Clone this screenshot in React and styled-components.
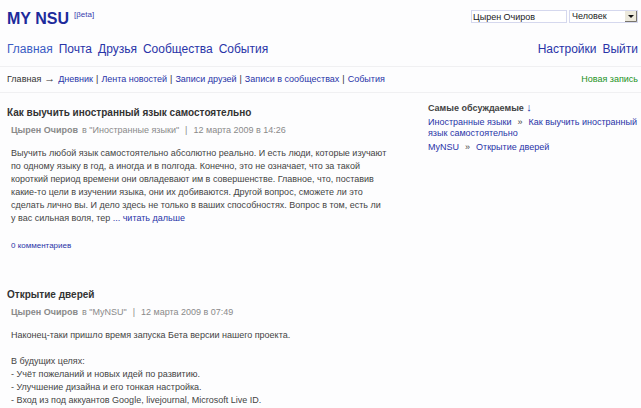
import React from "react";
import styled, { createGlobalStyle } from "styled-components";

const GlobalStyle = createGlobalStyle`
  * { box-sizing: border-box; }
  body {
    margin: 0;
    background: #fdfdfe;
    color: #444;
    font: 9px/13px "Liberation Sans", Arial, sans-serif;
  }
  h1, h2, h3, p, ul { margin: 0; padding: 0; }
`;

const Link = styled.a`
  color: ${(p) => p.$color || "#2934a8"};
  text-decoration: none;
  &:hover { text-decoration: underline; }
`;

const TopBar = styled.header`
  display: flex;
  justify-content: space-between;
  align-items: flex-start;
  height: 40px;
  padding: 9px 3px 0 7px;
`;

const Logo = styled.h1`
  display: flex;
  align-items: flex-start;
  gap: 5px;
  color: #1d2b9b;
  font: bold 16px/20px "Liberation Sans", Arial, sans-serif;
`;

const Beta = styled.sup`
  color: #3942ae;
  font: 8px/12px "Liberation Sans", Arial, sans-serif;
`;

const Search = styled.form`
  display: flex;
  gap: 2px;
  padding-top: 1px;
`;

const SearchInput = styled.input`
  width: 96px;
  height: 13px;
  padding: 0 1px;
  border: 1px solid #d5d8ee;
  background: #fff;
  color: #222;
  font: 9px/11px "Liberation Sans", Arial, sans-serif;
`;

const SelectBox = styled.div`
  display: grid;
  width: 69px;
  height: 13px;
  border: 1px solid #d5d8ee;
  background: #fff;
  > * { grid-area: 1 / 1; }
`;

const Select = styled.select`
  appearance: none;
  min-width: 0;
  height: 11px;
  padding: 0 14px 0 2px;
  border: 0;
  background: transparent;
  color: #222;
  font: 9px/11px "Liberation Sans", Arial, sans-serif;
`;

const Arrow = styled.svg`
  justify-self: end;
  width: 12px;
  height: 11px;
  pointer-events: none;
`;

const MainNav = styled.nav`
  display: flex;
  justify-content: space-between;
  height: 26px;
  padding: 0 3px 0 7px;
  font-size: 12px;
  line-height: 18px;
`;

const NavGroup = styled.div`
  display: flex;
  gap: 6px;
`;

const SubNav = styled.nav`
  display: flex;
  justify-content: space-between;
  padding: 6px 3px 6px 7px;
  border-top: 1px solid #f0f0f2;
  border-bottom: 1px solid #f0f0f2;
  color: #333;
`;

const Trail = styled.div`
  display: flex;
  gap: 3px;
`;

const TrailArrow = styled.span`
  font-size: 11px;
  line-height: 11px;
`;

const Columns = styled.main`
  display: grid;
  grid-template-columns: minmax(0, 393fr) minmax(0, 210fr);
  column-gap: 28px;
  padding: 10px 3px 0 7px;
`;

const Feed = styled.div`
  display: grid;
  align-content: start;
  gap: 36px;
  padding-top: 3px;
`;

const Title = styled.h2`
  color: #333;
  font-size: 10px;
  line-height: 13px;
`;

const Meta = styled.p`
  display: flex;
  gap: 4px;
  padding: 5px 4px 10px;
  color: #8a8a8a;
`;

const Divider = styled.span`
  margin: 0 2px;
`;

const Body = styled.p`
  padding: 0 4px;
  white-space: pre-line;
`;

const Comments = styled.p`
  padding: 14px 4px 0;
  font-size: 8px;
`;

const Sidebar = styled.aside`
  line-height: 11px;
`;

const SideTitle = styled.h3`
  margin-bottom: 3px;
  font-size: 9px;
  line-height: 11px;
`;

const Topics = styled.ul`
  display: grid;
  gap: 3px;
  list-style: none;
`;

const Chevron = styled.span`
  margin: 0 6px;
`;

const DownArrow = styled(Link)`
  font-size: 11px;
  font-weight: normal;
  line-height: 9px;
`;

const sections = ["Дневник", "Лента новостей", "Записи друзей", "Записи в сообществах", "События"];

export default function App() {
  return (
    <>
      <GlobalStyle />
      <TopBar>
        <Logo>MY NSU<Beta>[βeta]</Beta></Logo>
        <Search>
          <SearchInput aria-label="Поиск" defaultValue="Цырен Очиров" />
          <SelectBox>
            <Select aria-label="Тип" defaultValue="Человек">
              <option>Человек</option>
              <option>Сообщество</option>
            </Select>
            <Arrow viewBox="0 0 12 11" aria-hidden="true">
              <path d="M0 0h12v11H0z" fill="#ece9dc" />
              <path d="M11.5 0v10.5H0" fill="none" stroke="#77746c" />
              <path d="M3 4h6L6 7z" fill="#111" />
            </Arrow>
          </SelectBox>
        </Search>
      </TopBar>
      <MainNav>
        <NavGroup>
          <Link href="#" $color="#3b5cc4">Главная</Link>
          <Link href="#">Почта</Link>
          <Link href="#">Друзья</Link>
          <Link href="#">Сообщества</Link>
          <Link href="#">События</Link>
        </NavGroup>
        <NavGroup>
          <Link href="#">Настройки</Link>
          <Link href="#">Выйти</Link>
        </NavGroup>
      </MainNav>
      <SubNav>
        <Trail>
          <span>Главная</span>
          <TrailArrow>→</TrailArrow>
          {sections.map((s, i) => (
            <React.Fragment key={s}>
              {i > 0 && <span>|</span>}
              <Link href="#">{s}</Link>
            </React.Fragment>
          ))}
        </Trail>
        <Link href="#" $color="#1c921c">Новая запись</Link>
      </SubNav>
      <Columns>
        <Feed>
          <article>
            <Title>Как выучить иностранный язык самостоятельно</Title>
            <Meta><b>Цырен Очиров</b><span>в "Иностранные языки"</span><Divider>|</Divider><time>12 марта 2009 в 14:26</time></Meta>
            <Body>
              Выучить любой язык самостоятельно абсолютно реально. И есть люди, которые изучают по одному языку в год, а иногда и в полгода. Конечно, это не означает, что за такой короткий период времени они овладевают им в совершенстве. Главное, что, поставив какие-то цели в изучении языка, они их добиваются. Другой вопрос, сможете ли это сделать лично вы. И дело здесь не только в ваших способностях. Вопрос в том, есть ли у{"\u00a0"}вас сильная воля, тер <Link href="#">... читать дальше</Link>
            </Body>
            <Comments><Link href="#">0 комментариев</Link></Comments>
          </article>
          <article>
            <Title>Открытие дверей</Title>
            <Meta><b>Цырен Очиров</b><span>в "MyNSU"</span><Divider>|</Divider><time>12 марта 2009 в 07:49</time></Meta>
            <Body>{`Наконец-таки пришло время запуска Бета версии нашего проекта.

В будущих целях:
- Учёт пожеланий и новых идей по развитию.
- Улучшение дизайна и его тонкая настройка.
- Вход из под аккуантов Google, livejournal, Microsoft Live ID.`}</Body>
          </article>
        </Feed>
        <Sidebar>
          <SideTitle>Самые обсуждаемые <DownArrow href="#">↓</DownArrow></SideTitle>
          <Topics>
            <li><Link href="#">Иностранные языки</Link><Chevron>»</Chevron><Link href="#">Как выучить иностранный язык самостоятельно</Link></li>
            <li><Link href="#">MyNSU</Link><Chevron>»</Chevron><Link href="#">Открытие дверей</Link></li>
          </Topics>
        </Sidebar>
      </Columns>
    </>
  );
}
